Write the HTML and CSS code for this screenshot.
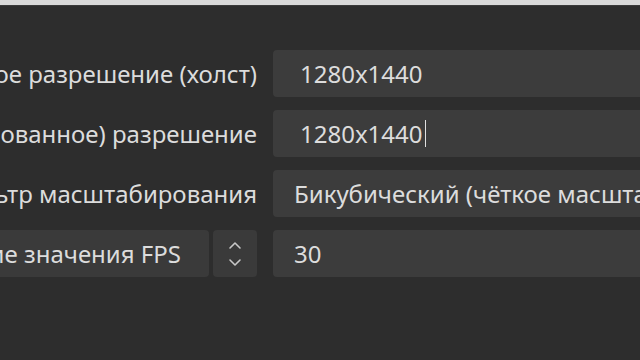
FILE: index.html
```html
<!DOCTYPE html>
<html lang="ru">
<head>
<meta charset="utf-8">
<link rel="stylesheet" href="styles.css">
</head>
<body>
<div class="topbar"></div>
<div class="form">
  <div class="label"><span>Базовое разрешение (холст)</span></div>
  <div class="field text">1280x1440</div>

  <div class="label"><span>Выходное (масштабированное) разрешение</span></div>
  <div class="field text">1280x1440<span class="caret"></span></div>

  <div class="label"><span>Фильтр масштабирования</span></div>
  <div class="field combo">Бикубический (чёткое масштабирование, 16 выборок)</div>

  <div class="label split">
    <div class="box fps"><span>Общие значения FPS</span></div>
    <div class="box spin">
      <svg width="16" height="30" viewBox="0 0 16 30" fill="none" stroke="#c8c8c8" stroke-width="1.6" stroke-linecap="round" stroke-linejoin="round">
        <path d="M3 9 L8 4 L13 9"/>
        <path d="M3 21 L8 26 L13 21"/>
      </svg>
    </div>
  </div>
  <div class="field combo">30</div>
</div>
</body>
</html>
```

FILE: styles.css
```css
html, body {
  margin: 0;
  padding: 0;
  width: 640px;
  height: 360px;
  overflow: hidden;
  background: #2d2d2d;
}

.topbar {
  height: 5px;
  background: #d9d9d9;
  border-bottom: 1px solid #3a3a3a;
}

.form {
  display: grid;
  grid-template-columns: 257px 1fr;
  grid-auto-rows: 47px;
  column-gap: 16px;
  row-gap: 13px;
  width: 680px;
  padding-top: 44px;
  font-family: "Noto Sans", "Open Sans", sans-serif;
  font-size: 24px;
  color: #dcdcdc;
}

.label {
  display: flex;
  justify-content: flex-end;
  align-items: center;
  overflow: hidden;
  white-space: nowrap;
}

.label span {
  flex: none;
}

.field {
  display: flex;
  align-items: center;
  background: #3c3c3c;
  border-radius: 4px;
  white-space: nowrap;
  overflow: hidden;
}

.field.text {
  padding-left: 27px;
}

.field.combo {
  padding-left: 21px;
}

.caret {
  display: inline-block;
  width: 1px;
  height: 27px;
  background: #e0e0e0;
  margin-left: 2px;
}

.label.split {
  gap: 4px;
  overflow: visible;
}

.box {
  height: 100%;
  background: #3a3a3a;
  border-radius: 4px;
  display: flex;
  align-items: center;
}

.fps {
  flex: 1;
  justify-content: flex-end;
  padding-right: 28px;
  overflow: hidden;
  border-radius: 0 4px 4px 0;
}

.fps span {
  flex: none;
}

.spin {
  width: 44px;
  flex: none;
  justify-content: center;
}
```
